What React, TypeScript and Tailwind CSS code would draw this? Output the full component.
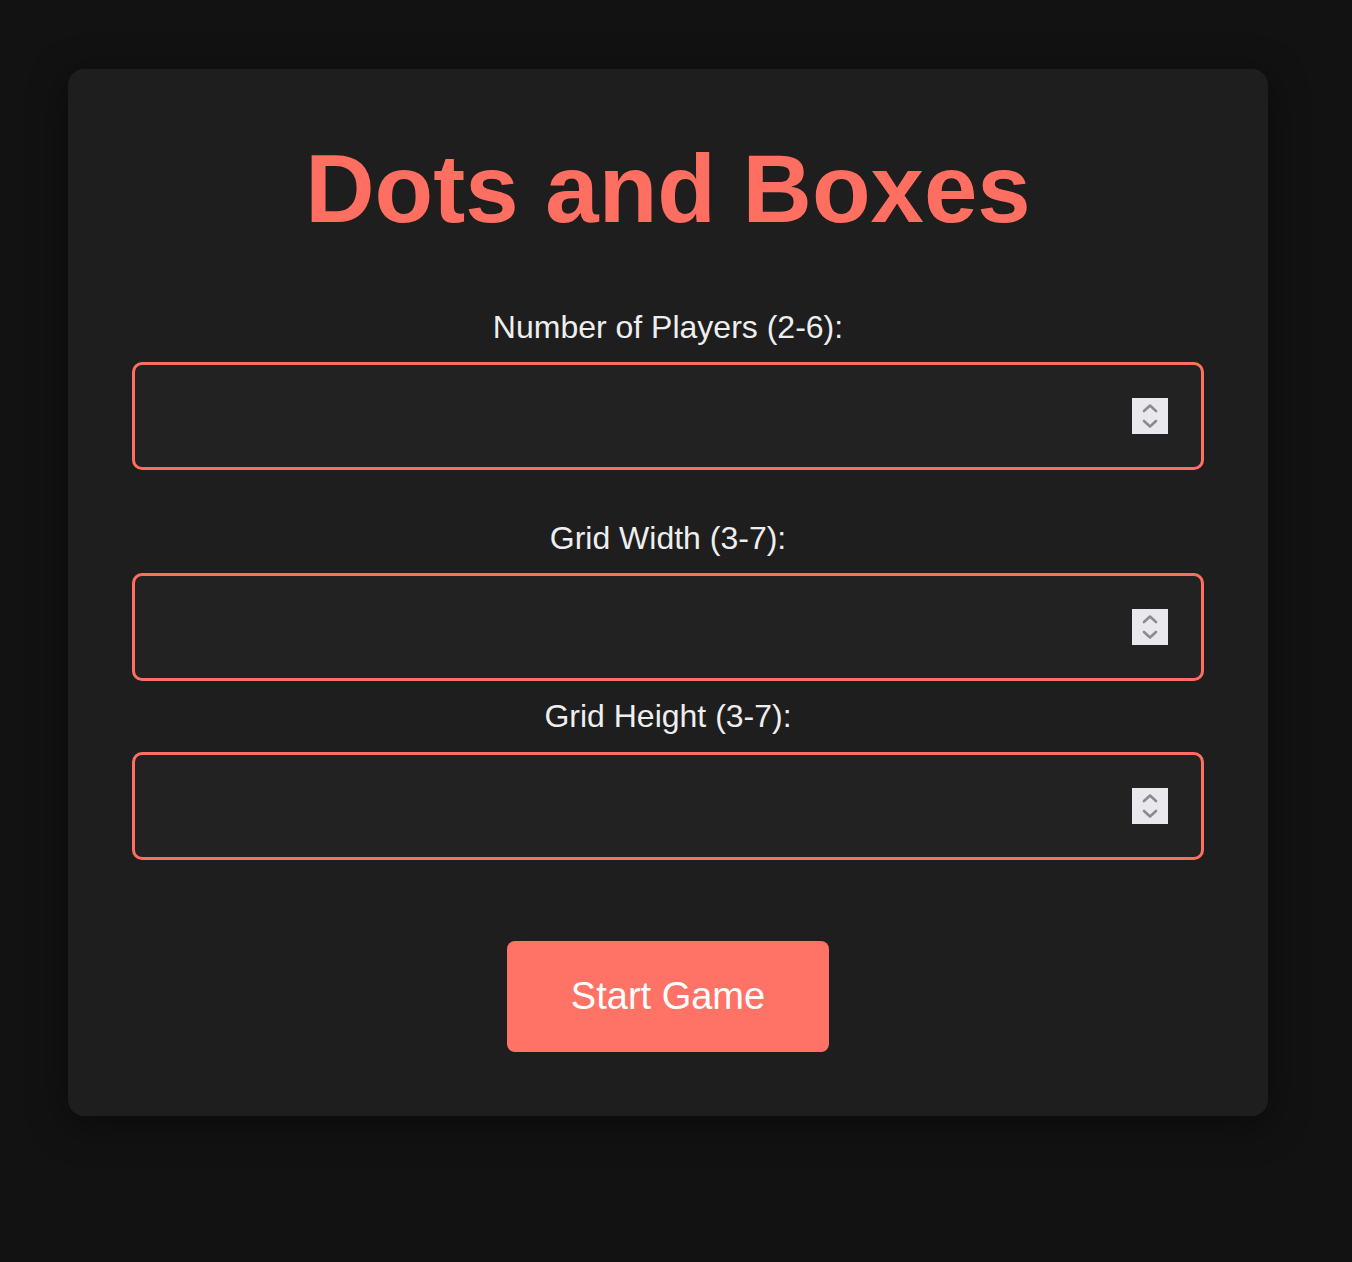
import React from "react";

function Spinner() {
  return (
    <div className="pointer-events-none absolute right-[36px] top-1/2 flex h-[36px] w-[36px] -translate-y-1/2 items-center justify-center bg-[#e9e9ed]">
      <svg width="36" height="36" viewBox="0 0 36 36" fill="none">
        <path d="M12 13 L18 7.5 L24 13" stroke="#8a8a90" strokeWidth="2.6" strokeLinecap="round" strokeLinejoin="round" />
        <path d="M12 23 L18 28.5 L24 23" stroke="#8a8a90" strokeWidth="2.6" strokeLinecap="round" strokeLinejoin="round" />
      </svg>
    </div>
  );
}

function Field({ label, inputClass }: { label: string; inputClass?: string }) {
  return (
    <div className="flex flex-col items-center">
      <label className="block text-center text-[32px] leading-[37px] text-[#eeeeee]">{label}</label>
      <div className={"relative w-full " + (inputClass ?? "")}>
        <input
          type="text"
          className="block h-[108px] w-full rounded-[10px] border-[3px] border-[#ff6f61] bg-[#222222] px-[32px] text-[32px] text-[#eeeeee] outline-none"
        />
        <Spinner />
      </div>
    </div>
  );
}

export default function App() {
  return (
    <div className="min-h-[1262px] w-full bg-[#121212] pt-[69px] font-['Liberation_Sans',Arial,Helvetica,sans-serif]">
      <div className="ml-[68px] w-[1200px] rounded-[16px] bg-[#1e1e1e] px-[64px] pt-[65px] pb-[64px] shadow-[0_8px_40px_rgba(0,0,0,0.45)]">
        <h1 className="text-center text-[96px] font-bold leading-[110px] text-[#ff6f61]">Dots and Boxes</h1>
        <div className="mt-[65px]">
          <Field label="Number of Players (2-6):" inputClass="mt-[16px]" />
        </div>
        <div className="mt-[50px]">
          <Field label="Grid Width (3-7):" inputClass="mt-[16px]" />
        </div>
        <div className="mt-[17px]">
          <Field label="Grid Height (3-7):" inputClass="mt-[17px]" />
        </div>
        <div className="mt-[81px] flex justify-center">
          <button className="flex h-[111px] w-[322px] items-center justify-center rounded-[8px] bg-[#ff7266] text-[38px] text-white">
            Start Game
          </button>
        </div>
      </div>
    </div>
  );
}
